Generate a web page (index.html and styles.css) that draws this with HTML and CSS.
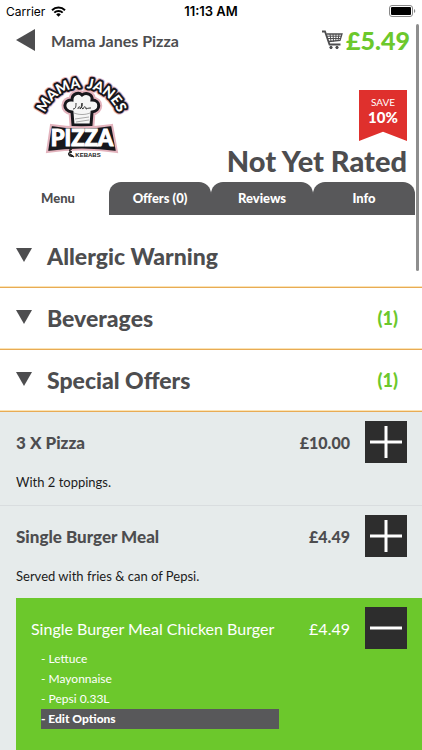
FILE: index.html
```html
<!DOCTYPE html>
<html lang="en">
<head>
    <meta charset="UTF-8">
    <meta name="viewport" content="width=device-width, initial-scale=1.0">
    <title>Mama Janes Pizza</title>
    <link rel="stylesheet" href="styles.css">
</head>
<body>
    <div class="status-bar">
        <span class="carrier">Carrier
            <svg class="wifi" viewBox="0 0 15 11" width="15" height="11">
                <path d="M1 4.2a9.3 9.3 0 0 1 13 0M3.3 6.6a6 6 0 0 1 8.4 0" fill="none" stroke="#000" stroke-width="2"/>
                <path d="M7.5 10.8L5.2 8.4a3.3 3.3 0 0 1 4.6 0z"/>
            </svg>
        </span>
        <span class="clock">11:13 AM</span>
        <svg class="battery" viewBox="0 0 27 12" width="27" height="12">
            <rect x="0.5" y="0.5" width="23" height="11" rx="2.5" fill="#fff" stroke="#888"/>
            <rect x="2" y="2" width="20" height="8" rx="1"/>
            <path d="M25 4v4a2.200 2.200 0 0 0 0-4z" fill="#888"/>
        </svg>
    </div>

    <header class="top-bar">
        <button type="button" class="back" aria-label="Back">
            <svg viewBox="0 0 19 22" width="19" height="22"><path d="M0 11L19 0v22z" fill="#4d4d4f"/></svg>
        </button>
        <h1>Mama Janes Pizza</h1>
        <a class="basket" href="#basket">
            <svg viewBox="0 0 21 20" width="21" height="20" fill="none" stroke="#4d4d4f">
                <path d="M0 1.500h3l4.500 13h11" stroke-width="1.800"/>
                <path d="M4.500 4H20l-2 6.500-11 1" stroke-width="1.300"/>
                <path d="M5 6.200h14M5.800 8.500h12.500M8 4l1 7.500M11 4l.5 7.500M14 4l-.2 7M17 4l-1 7"/>
                <circle cx="9" cy="17.500" r="1.200" fill="#4d4d4f"/>
                <circle cx="15" cy="17.500" r="1.200" fill="#4d4d4f"/>
            </svg>
            <span>£5.49</span>
        </a>
    </header>

    <section class="shop">
        <svg class="logo" viewBox="0 0 105 100" width="105" height="100" role="img" aria-label="Mama Janes Pizza &amp; Kebabs">
            <defs>
                <path id="arc" d="M13 68A39 39 0 1 1 90 68"/>
            </defs>
            <path d="M43 60L42 47c-10-1-9-13 0-12 0-7 7-8 10-5 4-3 11-1 10 5 9 0 9 11 0 12l-1 13z" fill="#222" stroke="#e3b3bd" stroke-width="7"/>
            <g class="logo-arc">
                <text class="logo-glow"><textPath href="#arc" startOffset="50%">MAMA&#160; JANES</textPath></text>
                <text class="logo-edge"><textPath href="#arc" startOffset="50%">MAMA&#160; JANES</textPath></text>
                <text class="logo-face"><textPath href="#arc" startOffset="50%">MAMA&#160; JANES</textPath></text>
            </g>
            <path d="M43 60L42 47c-10-1-9-13 0-12 0-7 7-8 10-5 4-3 11-1 10 5 9 0 9 11 0 12l-1 13z" fill="#f6f6f6" stroke="#17171c" stroke-width="3"/>
            <path d="M44 48c5 2 11 2 16 0M45 54l14-2M46 57l13-2" fill="none" stroke="#aaa"/>
            <path d="M43 44c3 0 3-3 3-6M48 44c0-3 3-3 2 0 2-2 3-4 2-6-1 3-1 5 1 6 1-3 3-3 3 0 2-1 4-1 5-1" fill="none" stroke="#333"/>
            <path d="M21 60q30 5 61 0l5 27q-35-5-70 0z" fill="#17171c" stroke="#e3b3bd" stroke-width="2"/>
            <text class="logo-pizza" x="52" y="81">PIZZA</text>
            <path d="M42 84c-3 0-3 3 0 3-5 0-4 5 1 4M40 89l4 3" fill="none" stroke="#222" stroke-width="1.500"/>
            <text class="logo-kebabs" x="58" y="92">KEBABS</text>
        </svg>
        <div class="summary">
            <div class="ribbon"><span>SAVE</span><strong>10%</strong></div>
            <p class="rating">Not Yet Rated</p>
        </div>
    </section>

    <nav class="tabs">
        <a class="tab active" href="#menu">Menu</a>
        <a class="tab" href="#offers">Offers (0)</a>
        <a class="tab" href="#reviews">Reviews</a>
        <a class="tab" href="#info">Info</a>
    </nav>

    <main id="menu">
        <button type="button" class="category">
            <svg viewBox="0 0 16 14" width="16" height="14"><path d="M0 0h16L8 14z" fill="#4d4d4f"/></svg>
            <span class="category-name">Allergic Warning</span>
        </button>
        <button type="button" class="category">
            <svg viewBox="0 0 16 14" width="16" height="14"><path d="M0 0h16L8 14z" fill="#4d4d4f"/></svg>
            <span class="category-name">Beverages</span>
            <span class="count">(1)</span>
        </button>
        <button type="button" class="category">
            <svg viewBox="0 0 16 14" width="16" height="14"><path d="M0 0h16L8 14z" fill="#4d4d4f"/></svg>
            <span class="category-name">Special Offers</span>
            <span class="count">(1)</span>
        </button>

        <div class="items">
            <article class="item">
                <div class="item-row">
                    <h2>3 X Pizza</h2>
                    <span class="price">£10.00</span>
                    <button type="button" class="qty" aria-label="Add 3 X Pizza">
                        <svg viewBox="0 0 42 42" width="42" height="42"><path d="M5 21h32M21 5v32" stroke="#fff" stroke-width="3"/></svg>
                    </button>
                </div>
                <p>With 2 toppings.</p>
            </article>
            <article class="item">
                <div class="item-row">
                    <h2>Single Burger Meal</h2>
                    <span class="price">£4.49</span>
                    <button type="button" class="qty" aria-label="Add Single Burger Meal">
                        <svg viewBox="0 0 42 42" width="42" height="42"><path d="M5 21h32M21 5v32" stroke="#fff" stroke-width="3"/></svg>
                    </button>
                </div>
                <p>Served with fries &amp; can of Pepsi.</p>
            </article>
            <article class="selected">
                <div class="item-row">
                    <h2>Single Burger Meal Chicken Burger</h2>
                    <span class="price">£4.49</span>
                    <button type="button" class="qty" aria-label="Remove Single Burger Meal Chicken Burger">
                        <svg viewBox="0 0 42 42" width="42" height="42"><path d="M5 21h32" stroke="#fff" stroke-width="3"/></svg>
                    </button>
                </div>
                <div class="options">
                    <span>- Lettuce</span>
                    <span>- Mayonnaise</span>
                    <span>- Pepsi 0.33L</span>
                    <button type="button" class="edit">- Edit Options</button>
                </div>
            </article>
        </div>
    </main>
    <div class="scroll-thumb"></div>
</body>
</html>
```
FILE: styles.css
```css
* {
    box-sizing: border-box;
}

body {
    display: flex;
    flex-direction: column;
    position: relative;
    min-height: 100vh;
    margin: 0;
    font-family: Lato, sans-serif;
    color: #4d4d4f;
    background: #fff;
}

h1, h2, p {
    margin: 0;
}

button {
    padding: 0;
    border: 0;
    background: none;
    font-family: inherit;
    color: inherit;
    cursor: pointer;
}

a {
    color: inherit;
    text-decoration: none;
}

svg {
    display: block;
    flex: none;
}

/* Status bar */
.status-bar {
    display: grid;
    grid-template-columns: 1fr auto 1fr;
    align-items: center;
    height: 22px;
    padding: 0 6px;
    font-family: Inter, sans-serif;
    font-size: 12px;
    color: #000;
}

.carrier {
    display: flex;
    align-items: center;
    gap: 6px;
}

.clock {
    font-size: 13px;
    font-weight: 600;
}

.battery {
    justify-self: end;
}

/* Header */
.top-bar {
    display: flex;
    align-items: center;
    height: 38px;
    padding: 0 12px 2px 16px;
}

.top-bar h1 {
    flex: 1;
    margin-left: 16px;
    font-size: 16px;
    font-weight: 700;
}

.basket {
    display: flex;
    align-items: center;
    gap: 3px;
    font-size: 25px;
    font-weight: 900;
    color: #6cc82c;
}

/* Shop logo and rating */
.shop {
    display: flex;
    justify-content: space-between;
    height: 122px;
    padding: 5px 15px 0 30px;
}

.summary {
    display: flex;
    flex-direction: column;
    align-items: flex-end;
    padding-top: 25px;
}

.ribbon {
    display: flex;
    flex-direction: column;
    align-items: center;
    width: 48px;
    height: 51px;
    padding-top: 6px;
    background: #df302d;
    clip-path: polygon(0 0, 100% 0, 100% 100%, 50% 82%, 0 100%);
    color: #fff;
    font-size: 10px;
    line-height: 12px;
}

.ribbon strong {
    font-size: 15px;
    line-height: 18px;
    font-weight: 900;
}

.rating {
    font-size: 29px;
    line-height: 40px;
    font-weight: 900;
}

.logo-arc text,
.logo-pizza,
.logo-kebabs {
    font-weight: 900;
    text-anchor: middle;
}

.logo-arc text {
    font-size: 14px;
    stroke-linejoin: round;
}

.logo-arc .logo-glow {
    fill: none;
    stroke: #e3b3bd;
    stroke-width: 6px;
}

.logo-arc .logo-edge {
    fill: none;
    stroke: #17171c;
    stroke-width: 4px;
}

.logo-arc .logo-face {
    fill: #fff;
}

.logo-pizza {
    font-size: 22px;
    fill: #fff;
    stroke: #fff;
}

.logo-kebabs {
    font-family: "Liberation Sans", sans-serif;
    font-size: 6px;
    fill: #222;
}

/* Tabs */
.tabs {
    display: flex;
    height: 33px;
    padding: 0 7px;
}

.tab {
    flex: 1;
    border-radius: 12px 12px 0 0;
    background: #58585a;
    color: #fff;
    font-size: 13px;
    line-height: 33px;
    font-weight: 900;
    text-align: center;
}

.tab.active {
    background: none;
    color: #4d4d4f;
}

/* Categories */
main {
    display: flex;
    flex: 1;
    flex-direction: column;
    padding-top: 11px;
}

.category {
    display: flex;
    align-items: center;
    gap: 15px;
    height: 62px;
    padding: 0 24px 2px 16px;
    border-bottom: 1px solid #e8ab55;
    box-shadow: inset 0 -1px #fbe3b4;
    font-size: 23px;
    font-weight: 900;
    text-align: left;
}

.category svg {
    margin-bottom: 2px;
}

.category-name {
    flex: 1;
}

.count {
    font-size: 18px;
    color: #6cc82c;
}

/* Menu items */
.items {
    flex: 1;
    background: #e6ebeb;
}

.item {
    height: 94px;
    padding: 9px 15px 0 16px;
    border-bottom: 1px solid #d9dddf;
}

.item:nth-child(2) {
    height: 92px;
    border-bottom: 0;
}

.item-row {
    display: flex;
    align-items: center;
    gap: 15px;
}

.item-row h2 {
    flex: 1;
    font-size: 17px;
    font-weight: 900;
}

.price {
    font-size: 16px;
    font-weight: 900;
}

.qty {
    background: #2d2d2d;
}

.item p {
    margin-top: 8px;
    font-size: 13px;
    line-height: 22px;
    color: #1c1c1c;
}

.selected {
    min-height: 152px;
    margin-left: 16px;
    padding: 9px 15px 20px;
    background: #6cc82c;
    color: #fff;
}

.item-row .price {
    white-space: nowrap;
}

.selected .item-row h2,
.selected .price {
    font-size: 16px;
    font-weight: 400;
}

.options {
    display: flex;
    flex-direction: column;
    margin-right: 128px;
    padding-left: 10px;
    font-size: 12px;
    line-height: 20px;
}

.edit {
    background: #58585a;
    font-size: 12px;
    line-height: 20px;
    font-weight: 900;
    text-align: left;
}

.scroll-thumb {
    position: absolute;
    top: 24px;
    right: 3px;
    width: 3px;
    height: 247px;
    border-radius: 2px;
    background: #8e8e8e;
}
```
